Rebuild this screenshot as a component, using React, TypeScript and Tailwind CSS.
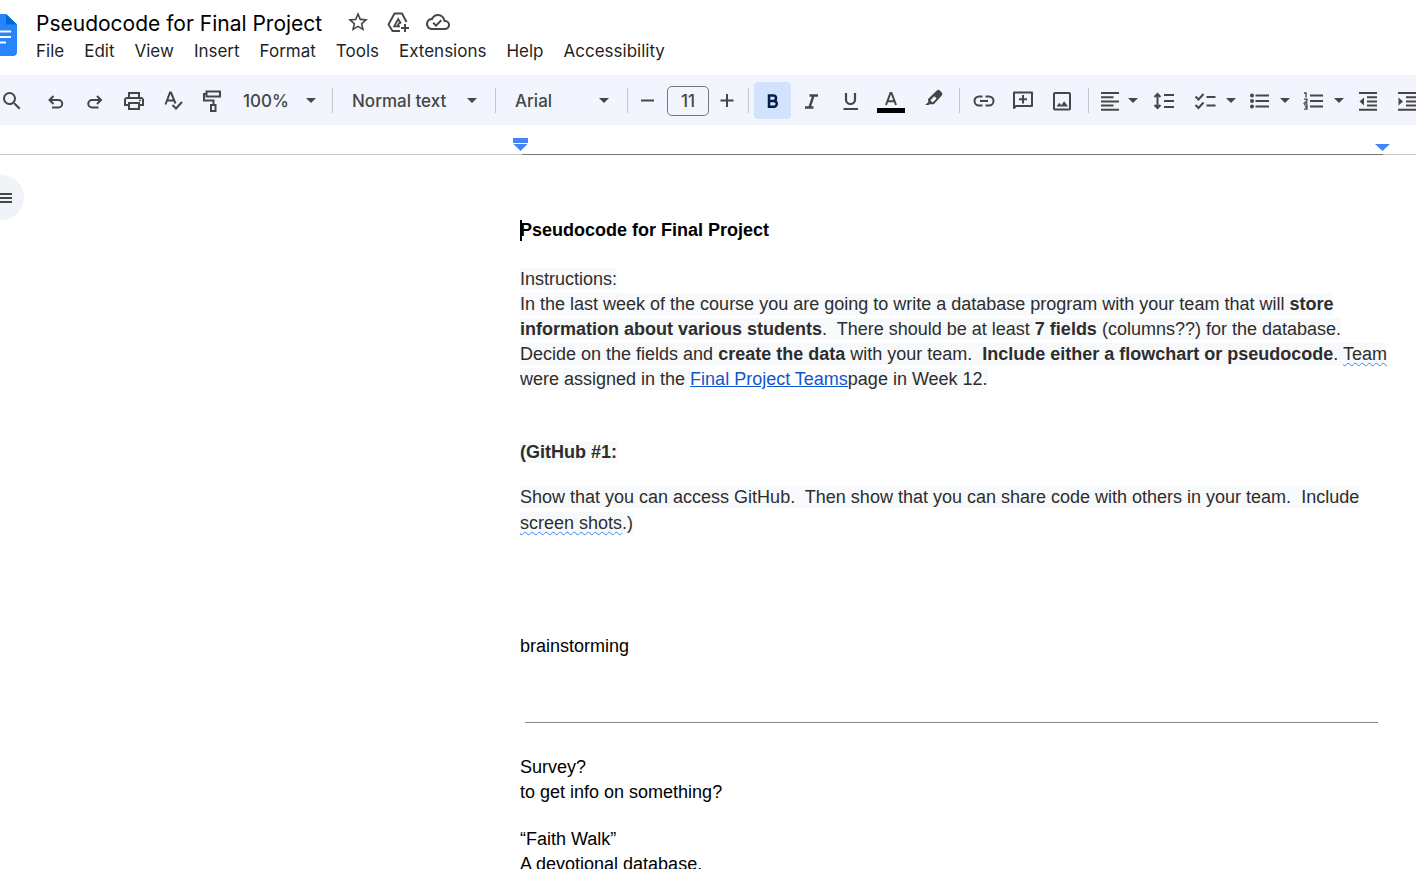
import type { ReactNode } from "react";
import { MdSearch, MdOutlinePrint, MdStarBorder, MdOutlineCloudDone } from "react-icons/md";

const menus = ["File", "Edit", "View", "Insert", "Format", "Tools", "Extensions", "Help", "Accessibility"];

function Icon({ children, className = "" }: { children: ReactNode; className?: string }) {
  return (
    <svg
      viewBox="0 0 24 24"
      width="24"
      height="24"
      fill="none"
      stroke="currentColor"
      strokeWidth="2"
      aria-hidden="true"
      className={`shrink-0 ${className}`}
    >
      {children}
    </svg>
  );
}

function Caret({ className = "" }: { className?: string }) {
  return (
    <svg viewBox="0 0 10 5" width="10" height="5" aria-hidden="true" className={`shrink-0 ${className}`}>
      <path d="M0 0h10L5 5z" fill="currentColor" />
    </svg>
  );
}

function Tool({ label, className = "w-[39px]", children }: { label: string; className?: string; children: ReactNode }) {
  return (
    <button type="button" aria-label={label} className={`flex h-[37px] shrink-0 items-center justify-center rounded ${className}`}>
      {children}
    </button>
  );
}

function Divider({ className = "" }: { className?: string }) {
  return <div className={`h-[25px] w-px shrink-0 bg-[#c7c7c7] ${className}`} />;
}

function Picker({ label, value, className, pad, caret }: { label: string; value: string; className: string; pad: string; caret: string }) {
  return (
    <div className={`grid shrink-0 items-center ${className}`}>
      <select aria-label={label} defaultValue={value} className={`col-start-1 row-start-1 w-full appearance-none bg-transparent leading-6 font-medium ${pad}`}>
        <option>{value}</option>
      </select>
      <Caret className={`pointer-events-none col-start-1 row-start-1 justify-self-end ${caret}`} />
    </div>
  );
}

function Mark({ children }: { children: ReactNode }) {
  return <span className="bg-[#f8f9fa] py-px text-[#2d2d2d]">{children}</span>;
}

function Flagged({ children }: { children: ReactNode }) {
  return <span className="underline decoration-[#4285f4] decoration-wavy decoration-[1px] underline-offset-2">{children}</span>;
}

function Header() {
  return (
    <header className="flex h-[75px] shrink-0 items-start overflow-hidden">
      <svg viewBox="0 0 17 42" width="17" height="42" aria-hidden="true" className="mt-[14px] shrink-0">
        <path d="M0 0h6l11 10.5V38a4 4 0 0 1-4 4H0z" fill="#2684fc" />
        <path d="M6 0l11 10.5H6z" fill="#0066da" />
        <path d="M0 17.5h11M0 23h11M0 28.5h6" stroke="#fff" strokeWidth="2.2" />
      </svg>
      <div className="ml-[19px] min-w-0">
        <div className="mt-2 flex h-[30px] items-center text-[#444746]">
          <h1 className="pt-0.5 text-[21px] leading-7 whitespace-nowrap text-black">Pseudocode for Final Project</h1>
          <div className="ml-6 flex items-center gap-4 pb-0.5">
            <button type="button" aria-label="Star"><MdStarBorder size={24} /></button>
            <button type="button" aria-label="Add to Drive">
              <Icon>
                <path d="M14 21H6.500L2.500 14.500 8.500 3.500h7.500L20.500 12" strokeLinejoin="round" strokeWidth="1.900" />
                <path d="M14 16.300H8.200L12.200 9l2.700 4.500M11.500 16l1.800-3.200" strokeWidth="1.800" />
                <path d="M19 14v8M15 18h8" />
              </Icon>
            </button>
            <button type="button" aria-label="Document status"><MdOutlineCloudDone size={24} /></button>
          </div>
        </div>
        <nav className="flex gap-5 text-[17px] leading-[26px] text-[#1f1f1f]">
          {menus.map((m) => (
            <button type="button" key={m}>{m}</button>
          ))}
        </nav>
      </div>
    </header>
  );
}

function Toolbar() {
  return (
    <div role="toolbar" aria-label="Formatting" className="flex h-[50px] shrink-0 items-center overflow-hidden bg-[#f2f5fd] pt-px text-[17px] text-[#444746]">
      <Tool label="Search the menus" className="mr-3 w-6"><MdSearch size={24} /></Tool>
      <Tool label="Undo">
        <Icon><path d="M9.500 7 5.500 11l4 4M6 11h8.500a3.750 3.750 0 0 1 0 7.500H8" /></Icon>
      </Tool>
      <Tool label="Redo">
        <Icon><path d="M14 7l4 4-4 4M17.500 11H9a3.750 3.750 0 0 0 0 7.500h6.500" /></Icon>
      </Tool>
      <Tool label="Print"><MdOutlinePrint size={24} /></Tool>
      <Tool label="Spelling and grammar check">
        <Icon><path d="M4.500 15.500 9 3.500h1l4.500 11M6 11.500h7M11.500 16l3.500 3.500 6-6.500" /></Icon>
      </Tool>
      <Tool label="Paint format">
        <Icon><path d="M6.500 2.500h13.500v5H6.500zM6.500 5H4v6.500h9.500V16M11 16h4.500v6H11z" /></Icon>
      </Tool>
      <Picker label="Zoom" value="100%" className="w-[101px]" pad="pl-3" caret="mr-4" />
      <Divider />
      <Picker label="Styles" value="Normal text" className="w-[162px]" pad="pl-[19px]" caret="mr-[18px]" />
      <Divider />
      <Picker label="Font" value="Arial" className="w-[131px]" pad="pl-[19px]" caret="mr-[18px]" />
      <Divider />
      <Tool label="Decrease font size"><Icon><path d="M5 11.500h13" /></Icon></Tool>
      <input aria-label="Font size" defaultValue="11" className="h-[30px] w-[42px] shrink-0 rounded-[5px] border border-[#747775] bg-transparent text-center font-medium" />
      <Tool label="Increase font size"><Icon><path d="M3.500 11.500h13M10 5v13" /></Icon></Tool>
      <Divider />
      <Tool label="Bold" className="ml-[5px] w-[37px] bg-[#d3e3fd] text-[#041e49]">
        <Icon><path d="M8 6.500h4.300a2.700 2.700 0 0 1 0 5.400H8zM8 11.900h4.900a2.900 2.900 0 0 1 0 5.800H8z" strokeWidth="2.500" /></Icon>
      </Tool>
      <Tool label="Italic">
        <Icon><path d="M10.500 6.500H19M6 18.500h8.500M14.500 6.500l-4 12" strokeWidth="2.400" /></Icon>
      </Tool>
      <Tool label="Underline">
        <Icon><path d="M8 4v6.500a4.500 4.500 0 0 0 9 0V4" strokeWidth="2.200" /><path d="M5.500 20H20" /></Icon>
      </Tool>
      <Tool label="Text color" className="w-[43px]">
        <svg viewBox="0 0 28 24" width="28" height="24" fill="none" aria-hidden="true">
          <path d="M9 16 13.500 4h1L19 16M10.500 12.300h7" stroke="currentColor" strokeWidth="2" />
          <path d="M0 19h28v5H0z" fill="#000" />
        </svg>
      </Tool>
      <Tool label="Highlight color" className="mr-[5px] w-[42px]">
        <Icon>
          <path d="M7 10 15.800 1.400a2.200 2.200 0 0 1 3 0l2 2a2.200 2.200 0 0 1 0 3L12.800 15.200H8.500L7.600 16H4.200L7.300 13z" fill="currentColor" stroke="none" />
          <path d="M9.300 11.200 13.300 7.200l2.300 2.300-4 4z" fill="#f2f5fd" stroke="none" />
        </Icon>
      </Tool>
      <Divider className="mr-1" />
      <Tool label="Insert link">
        <Icon><path d="M10.500 7.500H7a4.500 4.500 0 0 0 0 9h3.500M13.500 7.500H17a4.500 4.500 0 0 1 0 9h-3.500M8 12h8" /></Icon>
      </Tool>
      <Tool label="Add comment">
        <Icon><path d="M3 19V3.500h18V17H5zM12 6v8.500M8 10.300h8" strokeLinejoin="round" /></Icon>
      </Tool>
      <Tool label="Insert image" className="mr-[7px] w-[39px]">
        <Icon>
          <rect x="4" y="4" width="16" height="16.500" rx="1" />
          <path d="M6.500 17.500l2.800-3.800 2 2.600 2.800-4 4 5.200z" fill="currentColor" stroke="none" />
        </Icon>
      </Tool>
      <Divider />
      <Tool label="Align" className="ml-[9px] w-10 gap-[6px]">
        <Icon><path d="M3 4h18M3 8.200h12.500M3 12.400h18M3 16.600h12.500M3 20.800h18" /></Icon>
        <Caret />
      </Tool>
      <Tool label="Line and paragraph spacing" className="ml-1 w-[43px]">
        <Icon><path d="M5.500 5v14M2.500 8l3-3 3 3M2.500 16l3 3 3-3M12 6h10M12 12h10M12 18h10" /></Icon>
      </Tool>
      <Tool label="Checklist" className="ml-0.5 w-[54px] gap-[9px]">
        <Icon><path d="M2.500 7.500l3 3 5-5.500M2.500 16l3 3 5-5.500M13.500 8h9M13.500 16.500h9" /></Icon>
        <Caret />
      </Tool>
      <Tool label="Bulleted list" className="w-[54px] gap-[9px]">
        <Icon>
          <path d="M8.500 6.500H22M8.500 12H22M8.500 17.500H22" />
          <g fill="currentColor" stroke="none"><circle cx="5" cy="6.500" r="2" /><circle cx="5" cy="12" r="2" /><circle cx="5" cy="17.500" r="2" /></g>
        </Icon>
        <Caret />
      </Tool>
      <Tool label="Numbered list" className="w-[54px] gap-[9px]">
        <Icon>
          <path d="M9 6.500h13M9 12h13M9 17.500h13" />
          <path d="M3 4h2v4.500M3 10.200h3v1.600L3.500 14H6.500M3 15.800h3V20.200H3M4 18h2" strokeWidth="1.300" />
        </Icon>
        <Caret />
      </Tool>
      <Tool label="Decrease indent" className="w-[38px]">
        <Icon>
          <path d="M3 4h18M11 8.200h10M11 12.400h10M11 16.600h10M3 20.800h18" />
          <path d="M8 8.500v8l-4.500-4z" fill="currentColor" stroke="none" />
        </Icon>
      </Tool>
      <Tool label="Increase indent" className="w-[39px]">
        <Icon>
          <path d="M3 4h18M11 8.200h10M11 12.400h10M11 16.600h10M3 20.800h18" />
          <path d="M3.500 8.500v8l4.500-4z" fill="currentColor" stroke="none" />
        </Icon>
      </Tool>
    </div>
  );
}

function Ruler() {
  return (
    <div className="flex h-[30px] shrink-0">
      <div className="w-[522px] shrink-0 border-b border-[#c4c7c5]" />
      <div className="relative flex-1 border-b border-[#747775]">
        <svg viewBox="0 0 15 13" width="15" height="13" aria-hidden="true" className="absolute top-[13px] -left-[9px]">
          <path d="M0 0h15v5H0zM.5 6h14l-7 7z" fill="#4285f4" />
        </svg>
        <svg viewBox="0 0 15 7" width="15" height="7" aria-hidden="true" className="absolute top-[19px] -right-[7px]">
          <path d="M0 0h15L7.500 7z" fill="#4285f4" />
        </svg>
      </div>
      <div className="w-[33px] shrink-0 border-b border-[#c4c7c5]" />
    </div>
  );
}

function Document() {
  return (
    <article className="min-w-0 flex-1 pt-[63px] text-[18px] leading-[25px] whitespace-pre text-black">
      <h2 className="flex items-center font-bold">
        <span className="-mr-0.5 h-[21px] w-0.5 bg-black" />
        Pseudocode for Final Project
      </h2>
      <p className="mt-6">
        <Mark>Instructions:</Mark>
        <br />
        <Mark>In the last week of the course you are going to write a database program with your team that will <b>store</b></Mark>
        <br />
        <Mark><b>information about various students</b>.{"  "}There should be at least <b>7 fields</b> (columns??) for the database.</Mark>
        <br />
        <Mark>
          Decide on the fields and <b>create the data</b> with your team.{"  "}<b>Include either a flowchart or pseudocode</b>.{" "}
          <Flagged>Team</Flagged>
        </Mark>
        <br />
        <Mark>were assigned in the </Mark>
        <a href="#teams" className="text-[#1155cc] underline">Final Project Teams</a>
        <Mark>page in Week 12.</Mark>
      </p>
      <p className="mt-12 font-bold"><Mark>(GitHub #1:</Mark></p>
      <p className="mt-[19px] leading-[26px]">
        <Mark>Show that you can access GitHub.{"  "}Then show that you can share code with others in your team.{"  "}Include</Mark>
        <br />
        <Mark>
          <Flagged>screen shots</Flagged>.)
        </Mark>
      </p>
      <p className="mt-[98px]">brainstorming</p>
      <hr className="mx-[5px] mt-[63px] border-[#888888]" />
      <p className="mt-8">
        Survey?
        <br />
        to get info on something?
      </p>
      <p className="mt-[22px]">
        “Faith Walk”
        <br />
        A devotional database.
      </p>
    </article>
  );
}

export default function App() {
  return (
    <div className="flex h-screen flex-col overflow-hidden bg-white pb-[3px] font-['Inter',sans-serif]">
      <Header />
      <Toolbar />
      <Ruler />
      <main className="flex min-h-0 flex-1 overflow-hidden font-['Liberation_Sans',Arial,sans-serif]">
        <aside className="w-[520px] shrink-0 pt-5">
          <button type="button" aria-label="Show outline" className="flex h-[45px] w-6 items-center rounded-r-full bg-[#f0f4f9] text-[#444746]">
            <svg viewBox="0 0 12 12" width="12" height="12" fill="none" stroke="currentColor" strokeWidth="2" aria-hidden="true">
              <path d="M0 2h12M0 6h12M0 10h12" />
            </svg>
          </button>
        </aside>
        <Document />
        <div className="w-[33px] shrink-0" />
      </main>
    </div>
  );
}
